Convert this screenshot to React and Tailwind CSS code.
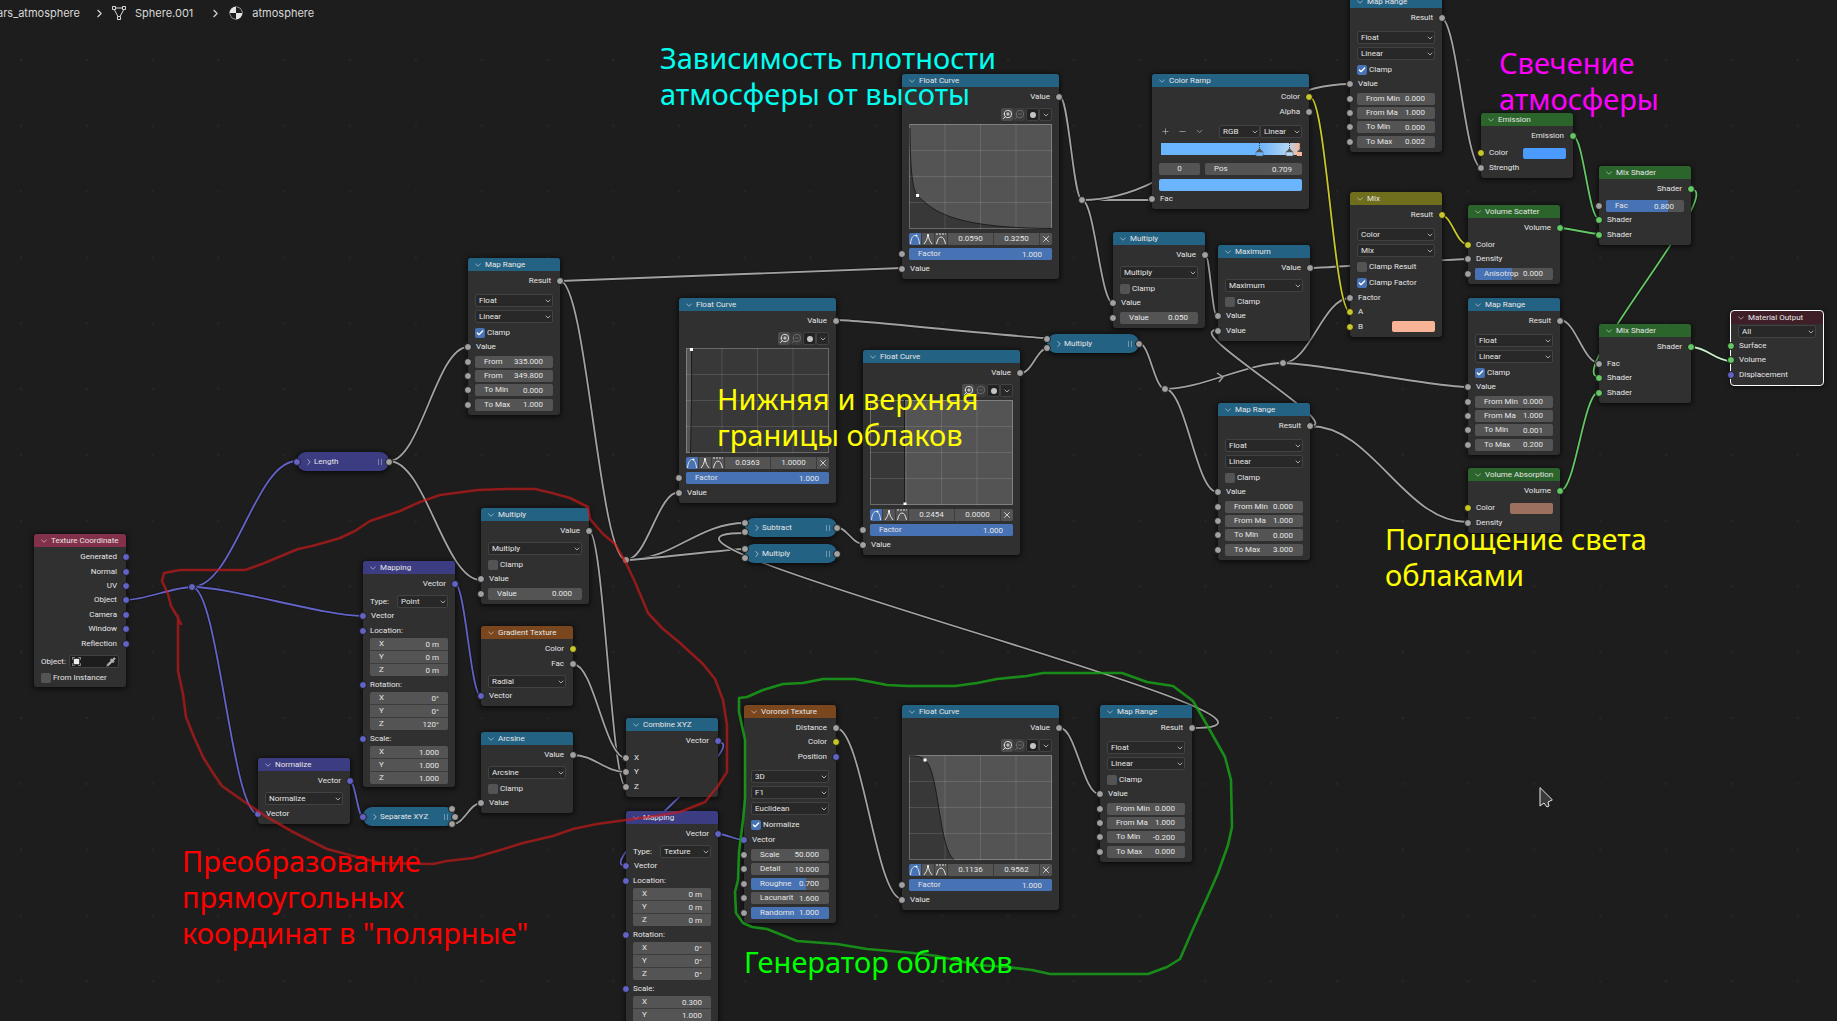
import React, { useId } from 'react';
import { Check, ChevronDown, ChevronRight, Minus, Pipette, Plus, X, ZoomIn, ZoomOut } from 'lucide-react';
import clsx from 'clsx';

const SOCKET_COLORS = {
  float: 'bg-[#a1a1a1]',
  vector: 'bg-[#6363c7]',
  color: 'bg-[#c7c729]',
  shader: 'bg-[#63c763]',
};

const HEADER_COLORS = {
  converter: 'bg-[#246283]',
  vector: 'bg-[#3c3c83]',
  texture: 'bg-[#79461d]',
  shader: 'bg-[#2b652b]',
  input: 'bg-[#83314a]',
  color: 'bg-[#6e6e1d]',
  output: 'bg-[#3f1e28]',
};

// socket rows share the height of their group evenly
const GROUP_HEIGHTS = {
  1: 'h-[14px]',
  2: 'h-[29px]',
  3: 'h-[43px]',
  4: 'h-[58px]',
  5: 'h-[72px]',
  6: 'h-[87px]',
  7: 'h-[101px]',
};

const LINK_COLORS = {
  float: '#a1a1a1',
  vector: '#6363c7',
  color: '#c7c729',
  shader: '#63c763',
  active: '#c9ecc9',
};

// [type, x1, y1, x2, y2]
const LINKS = [
  ['vector', 126, 600, 192, 587],
  ['vector', 192, 587, 297, 461],
  ['vector', 192, 587, 363, 616],
  ['vector', 192, 587, 258, 814],
  ['vector', 350, 781, 363, 817],
  ['vector', 455, 584, 481, 696],
  ['vector', 718, 742, 626, 866],
  ['vector', 718, 834, 744, 840],
  ['float', 389, 461, 468, 347],
  ['float', 389, 461, 481, 580],
  ['float', 453, 824, 481, 803],
  ['float', 589, 531, 626, 787],
  ['float', 573, 664, 626, 758],
  ['float', 573, 755, 626, 772],
  ['float', 560, 281, 902, 268],
  ['float', 560, 281, 626, 560],
  ['float', 626, 560, 679, 492],
  ['float', 626, 560, 745, 523],
  ['float', 626, 560, 745, 549],
  ['float', 1192, 728, 745, 533],
  ['float', 836, 728, 902, 899],
  ['float', 1060, 728, 1099, 794],
  ['float', 837, 320, 1048, 338],
  ['float', 1021, 373, 1048, 348],
  ['float', 836, 527, 863, 544],
  ['float', 1139, 343, 1165, 389],
  ['float', 1165, 389, 1283, 363],
  ['float', 1165, 389, 1217, 492],
  ['float', 1283, 363, 1350, 298],
  ['float', 1283, 363, 1467, 387],
  ['float', 1310, 426, 1467, 522],
  ['float', 1310, 426, 1217, 330],
  ['float', 1060, 97, 1082, 200],
  ['float', 1082, 200, 1152, 200],
  ['float', 1082, 200, 1350, 84],
  ['float', 1082, 200, 1113, 303],
  ['float', 1205, 254, 1217, 316],
  ['float', 1310, 268, 1467, 259],
  ['float', 1441, 18, 1481, 167],
  ['float', 1560, 320, 1599, 363],
  ['color', 1310, 97, 1350, 312],
  ['color', 1441, 215, 1467, 244],
  ['shader', 1573, 136, 1599, 219],
  ['shader', 1560, 228, 1599, 234],
  ['shader', 1691, 189, 1599, 377],
  ['shader', 1560, 491, 1599, 392],
  ['active', 1691, 347, 1731, 361],
];

const REROUTES = [
  ['vector', 192, 587],
  ['float', 626, 560],
  ['float', 1082, 200],
  ['float', 1165, 389],
  ['float', 1283, 363],
];

const RED_LOOP =
  '181,624 177,616 171,606 168,594 162,581 164,573 180,570 245,570 262,564 298,549 312,546 330,541 340,538 355,531 370,521 400,511 420,502 440,495 478,490 505,489 535,489 552,493 570,498 588,507 590,519 603,534 615,544 626,563 635,582 648,613 662,628 680,643 703,664 715,679 723,700 727,725 727,772 718,786 705,802 690,808 680,812 655,816 626,820 597,824 573,829 553,836 523,843 497,851 473,858 447,861 433,864 380,863 357,857 327,849 293,832 267,817 249,805 222,786 213,773 203,757 194,737 186,717 183,694 178,671 178,616';

const GREEN_LOOP =
  '739,698 747,697 763,690 783,684 803,683 823,679 855,679 872,682 887,685 907,686 955,686 977,683 997,679 1027,676 1043,673 1122,673 1147,682 1173,686 1193,701 1207,725 1225,757 1231,780 1232,827 1228,845 1218,873 1207,898 1193,929 1180,959 1167,967 1148,974 1050,974 1032,970 1007,967 977,965 937,956 913,953 867,949 837,944 797,941 767,929 752,927 743,923 736,913 735,892 738,880 739,852 743,820 745,798 745,740 739,712 739,698';

function linkPath(x1, y1, x2, y2) {
  const dx = Math.abs(x2 - x1);
  const slope = dx ? Math.abs(y2 - y1) / dx : 1;
  const handle = 0.4 * dx * Math.min(1, slope * 3.5);
  return `M${x1} ${y1}C${x1 + handle} ${y1} ${x2 - handle} ${y2} ${x2} ${y2}`;
}

function Socket({ type = 'float', side = 'left', className = 'top-1/2 -translate-y-1/2' }) {
  return (
    <span
      className={clsx(
        'absolute size-[8px] rounded-full border border-[#1a1a1a]',
        SOCKET_COLORS[type],
        side === 'left' ? '-left-[4px]' : '-right-[4px]',
        className
      )}
    />
  );
}

function Node({ title, kind = 'converter', width = 'w-[92px]', active = false, className, children }) {
  return (
    <section
      className={clsx(
        'absolute rounded-[3px] bg-[#303030] pb-[3px] shadow-[0_1px_5px_1px_rgba(0,0,0,0.65)]',
        active && 'outline outline-white',
        width,
        className
      )}
    >
      <header className={clsx('flex h-[13px] items-center gap-[2px] rounded-t-[3px] pl-[5px]', HEADER_COLORS[kind])}>
        <ChevronDown size={10} className="shrink-0 opacity-70" />
        <h2 className="whitespace-nowrap">{title}</h2>
      </header>
      {children}
    </section>
  );
}

function CollapsedNode({ title, kind = 'converter', className, children }) {
  return (
    <section
      className={clsx(
        'absolute flex h-[19px] w-[92px] items-center rounded-[9px] px-[7px] shadow-[0_1px_5px_1px_rgba(0,0,0,0.65)]',
        HEADER_COLORS[kind],
        className
      )}
    >
      <ChevronRight size={10} className="shrink-0 opacity-80" />
      <h2 className="whitespace-nowrap">{title}</h2>
      <span className="ml-auto h-[6px] w-[4px] border-x border-white/35" />
      {children}
    </section>
  );
}

// items: [label, socket type]
function Outputs({ items }) {
  return (
    <ul className={clsx('mt-[3px] grid auto-rows-fr', GROUP_HEIGHTS[items.length])}>
      {items.map(([label, type]) => (
        <li key={label} className="relative flex items-center justify-end pr-[9px]">
          {label}
          <Socket type={type} side="right" />
        </li>
      ))}
    </ul>
  );
}

function Controls({ roomy = false, children }) {
  return (
    <div className={clsx('flex flex-col gap-[3px] px-[7px]', roomy ? 'pt-[6px]' : 'pt-[4px]')}>{children}</div>
  );
}

function Inputs({ gap = 'mt-px', children }) {
  const rows = React.Children.toArray(children);
  return <div className={clsx('grid auto-rows-fr grid-cols-1', gap, GROUP_HEIGHTS[rows.length])}>{rows}</div>;
}

function InputRow({ type, children }) {
  return (
    <div className="relative flex items-center px-[7px]">
      <Socket type={type} />
      {children}
    </div>
  );
}

function LabelInput({ label, type }) {
  return (
    <InputRow type={type}>
      <span className="pl-px">{label}</span>
    </InputRow>
  );
}

function NumberField({ label, value, fill = 0 }) {
  const id = useId();
  return (
    <div className="relative flex h-[12px] w-full items-center overflow-hidden rounded-[2px] bg-[#545454] pr-[10px] pl-[9px]">
      {fill > 0 && <span className="absolute inset-y-0 left-0 bg-[#4772b3]" style={{ width: `${fill * 100}%` }} />}
      <label htmlFor={id} className="relative shrink-0">
        {label}
      </label>
      <input id={id} defaultValue={value} className="relative h-full w-0 flex-1 bg-transparent text-right" />
    </div>
  );
}

function NumberInput({ label, value, fill }) {
  return (
    <InputRow>
      <NumberField label={label} value={value} fill={fill} />
    </InputRow>
  );
}

function ColorInput({ label, color, name }) {
  return (
    <InputRow type="color">
      <span className="flex-1 pl-px">{label}</span>
      <button type="button" aria-label={name} className={clsx('h-[11px] w-[43px] rounded-[2px]', color)} />
    </InputRow>
  );
}

function Select({ value, label, width = 'w-full' }) {
  return (
    <span className={clsx('relative block', width)}>
      <select
        aria-label={label}
        defaultValue={value}
        className="block h-[13px] w-full appearance-none rounded-[2px] border border-[#424242] bg-[#282828] pl-[3px]"
      >
        <option>{value}</option>
      </select>
      <ChevronDown size={8} className="pointer-events-none absolute top-[3px] right-px" />
    </span>
  );
}

function Checkbox({ label, checked = false }) {
  return (
    <label className="flex h-[13px] items-center gap-[2px]">
      <span className="relative">
        <input
          type="checkbox"
          defaultChecked={checked}
          className="peer block size-[10px] appearance-none rounded-[2px] bg-[#545454] checked:bg-[#4772b3]"
        />
        <Check
          size={8}
          strokeWidth={4}
          className="pointer-events-none absolute top-px left-px hidden text-white peer-checked:block"
        />
      </span>
      {label}
    </label>
  );
}

function VectorInput({ label, values }) {
  return (
    <fieldset className="min-w-0">
      <legend className="contents">
        <span className="relative flex h-[15px] items-center pl-[7px]">
          {label}:
          <Socket type="vector" />
        </span>
      </legend>
      <div className="mx-[7px] grid h-[38px] grid-cols-1 gap-px overflow-hidden rounded-[2px] bg-[#3c3c3c]">
        {['X', 'Y', 'Z'].map((axis, i) => (
          <label key={axis} className="flex h-[12px] items-center bg-[#545454] px-[9px]">
            {axis}
            <input defaultValue={values[i]} className="h-full w-0 flex-1 bg-transparent text-right" />
          </label>
        ))}
      </div>
    </fieldset>
  );
}

function MapRange({ className, clamp = false, from = ['0.000', '1.000'], fromLabels = ['From Min', 'From Ma'], to }) {
  return (
    <Node title="Map Range" className={className}>
      <Outputs items={[['Result', 'float']]} />
      <Controls roomy>
        <Select label="Data type" value="Float" />
        <Select label="Interpolation" value="Linear" />
        <Checkbox label="Clamp" checked={clamp} />
      </Controls>
      <Inputs>
        <LabelInput label="Value" />
        <NumberInput label={fromLabels[0]} value={from[0]} />
        <NumberInput label={fromLabels[1]} value={from[1]} />
        <NumberInput label="To Min" value={to[0]} />
        <NumberInput label="To Max" value={to[1]} />
      </Inputs>
    </Node>
  );
}

function Mapping({ className, type, location, rotation, scale }) {
  return (
    <Node title="Mapping" kind="vector" className={className}>
      <Outputs items={[['Vector', 'vector']]} />
      <Controls>
        <label className="flex items-center justify-between">
          Type:
          <Select label="Type" value={type} width="w-[51px]" />
        </label>
      </Controls>
      <Inputs>
        <LabelInput label="Vector" type="vector" />
      </Inputs>
      <div className="grid grid-cols-1 gap-px">
        <VectorInput label="Location" values={location} />
        <VectorInput label="Rotation" values={rotation} />
        <VectorInput label="Scale" values={scale} />
      </div>
    </Node>
  );
}

function HandleButton({ name, active = false, children }) {
  return (
    <button
      type="button"
      aria-label={name}
      className={clsx('flex w-[12px] items-center justify-center', active ? 'bg-[#4772b3]' : 'bg-[#545454]')}
    >
      <svg viewBox="0 0 12 12" className="size-[12px]" fill="none" stroke="#e0e0e0">
        {children}
      </svg>
    </button>
  );
}

function FloatCurve({ className, area, curve, point, values }) {
  return (
    <Node title="Float Curve" width="w-[157px]" className={className}>
      <Outputs items={[['Value', 'float']]} />
      <Controls>
        <div className="flex h-[13px] justify-end">
          <button type="button" aria-label="Zoom in" className="flex w-[12px] items-center justify-center rounded-[2px] bg-[#4c4c4c]">
            <ZoomIn size={11} className="-scale-x-100" />
          </button>
          <button type="button" aria-label="Zoom out" className="flex w-[12px] items-center justify-center rounded-[2px] bg-[#3c3c3c] text-[#6e6e6e]">
            <ZoomOut size={11} className="-scale-x-100" />
          </button>
          <button type="button" aria-label="Clipping" className="ml-px flex w-[13px] items-center justify-center rounded-[2px] border border-[#424242] bg-[#222]">
            <span className="size-[6px] rounded-full bg-[#c4c4c4]" />
          </button>
          <button type="button" aria-label="Tools" className="flex w-[13px] items-center justify-center rounded-[2px] border border-[#424242] bg-[#282828]">
            <ChevronDown size={8} />
          </button>
        </div>
        <svg viewBox="0 0 143 105" preserveAspectRatio="none" className="block h-[105px] w-full">
          <rect width="143" height="105" fill="#545454" />
          <path d={area} fill="#383838" />
          <path d="M36 0V105M71.5 0V105M107 0V105M0 26.5H143M0 52.5H143M0 78.5H143" stroke="#fff" strokeOpacity="0.12" />
          <rect x="0.5" y="0.5" width="142" height="104" fill="none" stroke="#fff" strokeOpacity="0.25" />
          <path d={curve} fill="none" stroke="#1c1c1c" />
          <rect x={point[0] - 1.5} y={point[1] - 1.5} width="3" height="3" fill="#fff" />
        </svg>
        <div className="mt-px flex h-[12px] gap-px overflow-hidden rounded-[2px] bg-[#3c3c3c]">
          <HandleButton name="Auto handle" active>
            <path d="M1.5 11C2 5 4 2.500 6 2.500S10 5 10.500 11" />
            <circle cx="7.500" cy="2.500" r="1" fill="#fff" stroke="none" />
          </HandleButton>
          <HandleButton name="Vector handle">
            <path d="M2 11Q5 8 6 2Q7 8 10 11" />
            <circle cx="6" cy="2" r="1" fill="#fff" stroke="none" />
          </HandleButton>
          <HandleButton name="Auto clamped handle">
            <path d="M1.500 11Q3 4 6 4T10.500 11" />
            <path d="M1 1H11" strokeDasharray="2 1" />
          </HandleButton>
          <input aria-label="Point X" defaultValue={values[0]} className="w-0 flex-1 bg-[#545454] text-center" />
          <input aria-label="Point Y" defaultValue={values[1]} className="w-0 flex-1 bg-[#545454] text-center" />
          <button type="button" aria-label="Delete point" className="flex w-[12px] items-center justify-center bg-[#545454]">
            <X size={10} />
          </button>
        </div>
      </Controls>
      <Inputs gap="mt-[2px]">
        <NumberInput label="Factor" value="1.000" fill={1} />
        <LabelInput label="Value" />
      </Inputs>
    </Node>
  );
}

function ColorRamp({ className }) {
  return (
    <Node title="Color Ramp" width="w-[157px]" className={className}>
      <Outputs items={[['Color', 'color'], ['Alpha', 'float']]} />
      <Controls roomy>
        <div className="flex h-[13px] items-center">
          <div className="flex flex-1 items-center gap-[8px] pl-[2px] text-[#a8a8a8]">
            <button type="button" aria-label="Add stop"><Plus size={9} /></button>
            <button type="button" aria-label="Remove stop"><Minus size={9} /></button>
            <button type="button" aria-label="Ramp tools"><ChevronDown size={9} /></button>
          </div>
          <Select label="Color mode" value="RGB" width="w-[41px]" />
          <Select label="Ramp interpolation" value="Linear" width="w-[42px]" />
        </div>
        <svg viewBox="0 0 143 19" className="block h-[19px] w-full">
          <defs>
            <linearGradient id="ramp">
              <stop offset="0.709" stopColor="#6bb5ff" />
              <stop offset="0.92" stopColor="#b4d4ef" />
              <stop offset="1" stopColor="#f7b497" />
            </linearGradient>
          </defs>
          <rect x="2" y="2" width="139" height="12" fill="url(#ramp)" />
          <path d="M100.500 2V8M130.500 2V8M141 2V8" stroke="#444" strokeDasharray="1 1" />
          <path d="M97 11l3.500-4 3.500 4zM127 11l3.500-4 3.500 4zM138 11l3.500-4v4z" fill="#555" />
          <rect x="97" y="11" width="7" height="4" fill="#6bb5ff" stroke="#555" strokeWidth="0.5" />
          <rect x="127" y="11" width="7" height="4" fill="#b9dcf8" stroke="#555" strokeWidth="0.5" />
          <rect x="138" y="11" width="5" height="4" fill="#f7b497" />
        </svg>
        <div className="flex justify-between">
          <input aria-label="Active stop" defaultValue="0" className="h-[12px] w-[41px] rounded-[2px] bg-[#545454] text-center" />
          <div className="w-[97px]">
            <NumberField label="Pos" value="0.709" />
          </div>
        </div>
        <button type="button" aria-label="Stop color" className="mt-px h-[12px] rounded-[2px] bg-[#6bb5ff]" />
      </Controls>
      <Inputs>
        <LabelInput label="Fac" />
      </Inputs>
    </Node>
  );
}

function Links() {
  return (
    <svg className="absolute inset-0 h-full w-full" fill="none">
      <defs>
        <pattern id="grid" x="20" y="59" width="65.8" height="65.8" patternUnits="userSpaceOnUse">
          <rect width="2" height="2" fill="#272727" />
        </pattern>
      </defs>
      <rect width="100%" height="100%" fill="url(#grid)" />
      {LINKS.map(([type, ...ends]) => (
        <g key={ends.join()}>
          <path d={linkPath(...ends)} stroke="#141414" strokeWidth="3.5" />
          <path d={linkPath(...ends)} stroke={LINK_COLORS[type]} strokeWidth="1.8" />
        </g>
      ))}
      <path d="M1217 373L1223 377L1219 382" stroke="#a1a1a1" strokeWidth="1.5" />
      {REROUTES.map(([type, x, y]) => (
        <circle key={x} cx={x} cy={y} r="3.5" fill={LINK_COLORS[type]} stroke="#1a1a1a" />
      ))}
    </svg>
  );
}

function Note({ className, lines }) {
  return (
    <p className={clsx("absolute font-['Noto_Sans','Open_Sans',sans-serif] text-[29px] leading-[36px] whitespace-nowrap", className)}>
      {lines.map((line) => (
        <span key={line} className="block">
          {line}
        </span>
      ))}
    </p>
  );
}

function Breadcrumbs() {
  return (
    <nav className="relative -ml-[46px] flex h-[26px] items-center font-['Inter',sans-serif] text-[11px] text-[#d8d8d8]">
      <a href="#object" className="w-[126px] text-right">Mars_atmosphere</a>
      <ChevronRight size={13} className="mr-[6px] ml-[13px]" />
      <svg viewBox="0 0 14 14" className="mr-[9px] size-[14px]" fill="none" stroke="currentColor">
        <path d="M3 2H11M2.500 4L6 10.500M11.500 4L8 10.500" />
        <path d="M0.500 0.500h3v3h-3zM10.500 0.500h3v3h-3zM5.500 10.500h3v3h-3z" />
      </svg>
      <a href="#mesh">Sphere.001</a>
      <ChevronRight size={13} className="mr-[7px] ml-[16px]" />
      <svg viewBox="0 0 14 14" className="mr-[9px] size-[14px]">
        <circle cx="7" cy="7" r="6.500" fill="#e4e4e4" />
        <path d="M7 7V1A6 6 0 0 1 13 7ZM7 7V13A6 6 0 0 1 1 7Z" fill="#1d1d1d" />
      </svg>
      <a href="#material">atmosphere</a>
    </nav>
  );
}

export default function App() {
  return (
    <main className="relative h-screen w-full overflow-hidden bg-[#1d1d1d] font-['Roboto','Inter',sans-serif] text-[8px] leading-[12px] text-[#e6e6e6]">
      <Links />
      <Breadcrumbs />

      {/* Coordinates */}
      <Node title="Texture Coordinate" kind="input" className="top-[534px] left-[34px]">
        <Outputs
          items={[
            ['Generated', 'vector'],
            ['Normal', 'vector'],
            ['UV', 'vector'],
            ['Object', 'vector'],
            ['Camera', 'vector'],
            ['Window', 'vector'],
            ['Reflection', 'vector'],
          ]}
        />
        <Controls>
          <label className="flex items-center justify-between">
            Object:
            <span className="flex h-[13px] w-[50px] items-center rounded-[2px] border border-[#424242] bg-[#1d1d1d] px-[2px]">
              <svg viewBox="0 0 10 10" className="size-[9px]" fill="none" stroke="#999">
                <path d="M0.500 3V0.500H3M7 0.500H9.500V3M9.500 7V9.500H7M3 9.500H0.500V7" />
                <rect x="2" y="2" width="6" height="6" fill="#eee" stroke="none" />
              </svg>
              <input className="w-0 flex-1 bg-transparent" />
              <Pipette size={10} fill="currentColor" className="text-[#b0b0b0]" />
            </span>
          </label>
          <Checkbox label="From Instancer" />
        </Controls>
      </Node>
      <CollapsedNode title="Length" kind="vector" className="top-[452px] left-[297px]">
        <Socket type="vector" />
        <Socket side="right" />
      </CollapsedNode>
      <Mapping
        className="top-[561px] left-[363px]"
        type="Point"
        location={['0 m', '0 m', '0 m']}
        rotation={['0°', '0°', '120°']}
        scale={['1.000', '1.000', '1.000']}
      />
      <Node title="Normalize" kind="vector" className="top-[758px] left-[258px]">
        <Outputs items={[['Vector', 'vector']]} />
        <Controls>
          <Select label="Operation" value="Normalize" />
        </Controls>
        <Inputs gap="mt-[2px]">
          <LabelInput label="Vector" type="vector" />
        </Inputs>
      </Node>
      <CollapsedNode title="Separate XYZ" className="top-[807px] left-[363px]">
        <Socket type="vector" />
        <Socket side="right" className="top-[-2px] mr-[3px]" />
        <Socket side="right" />
        <Socket side="right" className="bottom-[-2px] mr-[3px]" />
      </CollapsedNode>
      <MapRange
        className="top-[258px] left-[468px]"
        clamp
        fromLabels={['From', 'From']}
        from={['335.000', '349.800']}
        to={['0.000', '1.000']}
      />
      <Node title="Multiply" width="w-[108px]" className="top-[508px] left-[481px]">
        <Outputs items={[['Value', 'float']]} />
        <Controls>
          <Select label="Operation" value="Multiply" />
          <Checkbox label="Clamp" />
        </Controls>
        <Inputs>
          <LabelInput label="Value" />
          <NumberInput label="Value" value="0.000" />
        </Inputs>
      </Node>
      <Node title="Gradient Texture" kind="texture" className="top-[626px] left-[481px]">
        <Outputs items={[['Color', 'color'], ['Fac', 'float']]} />
        <Controls>
          <Select label="Gradient type" value="Radial" />
        </Controls>
        <Inputs>
          <LabelInput label="Vector" type="vector" />
        </Inputs>
      </Node>
      <Node title="Arcsine" className="top-[732px] left-[481px]">
        <Outputs items={[['Value', 'float']]} />
        <Controls>
          <Select label="Operation" value="Arcsine" />
          <Checkbox label="Clamp" />
        </Controls>
        <Inputs>
          <LabelInput label="Value" />
        </Inputs>
      </Node>
      <Node title="Combine XYZ" className="top-[718px] left-[626px]">
        <Outputs items={[['Vector', 'vector']]} />
        <Inputs gap="mt-[3px]">
          <LabelInput label="X" />
          <LabelInput label="Y" />
          <LabelInput label="Z" />
        </Inputs>
      </Node>

      {/* Cloud generator */}
      <Mapping
        className="top-[811px] left-[626px]"
        type="Texture"
        location={['0 m', '0 m', '0 m']}
        rotation={['0°', '0°', '0°']}
        scale={['0.300', '1.000', '1.000']}
      />
      <Node title="Voronoi Texture" kind="texture" className="top-[705px] left-[744px]">
        <Outputs items={[['Distance', 'float'], ['Color', 'color'], ['Position', 'vector']]} />
        <Controls roomy>
          <Select label="Dimensions" value="3D" />
          <Select label="Feature" value="F1" />
          <Select label="Distance metric" value="Euclidean" />
          <Checkbox label="Normalize" checked />
        </Controls>
        <Inputs gap="mt-[2px]">
          <LabelInput label="Vector" type="vector" />
          <NumberInput label="Scale" value="50.000" />
          <NumberInput label="Detail" value="10.000" />
          <NumberInput label="Roughne" value="0.700" fill={0.7} />
          <NumberInput label="Lacunarit" value="1.600" />
          <NumberInput label="Randomn" value="1.000" fill={1} />
        </Inputs>
      </Node>
      <FloatCurve
        className="top-[705px] left-[902px]"
        area="M0 1Q11 0 16 5C30 15 30 95 45 104.500V105H0Z"
        curve="M0 1Q11 0 16 5C30 15 30 95 45 104.500"
        point={[16, 5]}
        values={['0.1136', '0.9562']}
      />
      <MapRange className="top-[705px] left-[1100px]" to={['-0.200', '0.000']} />

      {/* Cloud borders */}
      <FloatCurve
        className="top-[298px] left-[679px]"
        area="M5 0H143V105H5Z"
        curve="M5.500 1V53L4.500 105"
        point={[5.5, 1.5]}
        values={['0.0363', '1.0000']}
      />
      <FloatCurve
        className="top-[350px] left-[863px]"
        area="M0 0H35V105H0Z"
        curve="M34.500 0V105"
        point={[35, 104]}
        values={['0.2454', '0.0000']}
      />
      <CollapsedNode title="Subtract" className="top-[518px] left-[745px]">
        <Socket className="top-[1px]" />
        <Socket className="bottom-[1px]" />
        <Socket side="right" />
      </CollapsedNode>
      <CollapsedNode title="Multiply" className="top-[544px] left-[745px]">
        <Socket className="top-[1px]" />
        <Socket className="bottom-[1px]" />
        <Socket side="right" />
      </CollapsedNode>
      <CollapsedNode title="Multiply" className="top-[334px] left-[1047px]">
        <Socket className="top-[1px]" />
        <Socket className="bottom-[1px]" />
        <Socket side="right" />
      </CollapsedNode>

      {/* Density by height */}
      <FloatCurve
        className="top-[74px] left-[902px]"
        area="M1 0C1 40 3 66 8.500 71.500C25 88 45 104 143 104.500V105H0V0Z"
        curve="M1 4C1 40 3 66 8.500 71.500C25 88 45 104 143 104.500"
        point={[8.5, 71.5]}
        values={['0.0590', '0.3250']}
      />
      <ColorRamp className="top-[74px] left-[1152px]" />
      <Node title="Multiply" className="top-[232px] left-[1113px]">
        <Outputs items={[['Value', 'float']]} />
        <Controls>
          <Select label="Operation" value="Multiply" />
          <Checkbox label="Clamp" />
        </Controls>
        <Inputs>
          <LabelInput label="Value" />
          <NumberInput label="Value" value="0.050" />
        </Inputs>
      </Node>
      <Node title="Maximum" className="top-[245px] left-[1218px]">
        <Outputs items={[['Value', 'float']]} />
        <Controls>
          <Select label="Operation" value="Maximum" />
          <Checkbox label="Clamp" />
        </Controls>
        <Inputs>
          <LabelInput label="Value" />
          <LabelInput label="Value" />
        </Inputs>
      </Node>
      <MapRange className="top-[403px] left-[1218px]" to={['0.000', '3.000']} />

      {/* Shading */}
      <MapRange className="-top-[5px] left-[1350px]" clamp to={['0.000', '0.002']} />
      <Node title="Mix" kind="color" className="top-[192px] left-[1350px]">
        <Outputs items={[['Result', 'color']]} />
        <Controls roomy>
          <Select label="Data type" value="Color" />
          <Select label="Blend mode" value="Mix" />
          <Checkbox label="Clamp Result" />
          <Checkbox label="Clamp Factor" checked />
        </Controls>
        <Inputs gap="mt-[2px]">
          <LabelInput label="Factor" />
          <LabelInput label="A" type="color" />
          <ColorInput label="B" name="Color B" color="bg-[#f7b497]" />
        </Inputs>
      </Node>
      <Node title="Emission" kind="shader" className="top-[113px] left-[1481px]">
        <Outputs items={[['Emission', 'shader']]} />
        <Inputs gap="mt-[3px]">
          <ColorInput label="Color" name="Emission color" color="bg-[#4b9bff]" />
          <LabelInput label="Strength" />
        </Inputs>
      </Node>
      <Node title="Volume Scatter" kind="shader" className="top-[205px] left-[1468px]">
        <Outputs items={[['Volume', 'shader']]} />
        <Inputs gap="mt-[3px]">
          <LabelInput label="Color" type="color" />
          <LabelInput label="Density" />
          <NumberInput label="Anisotrop" value="0.000" fill={0.48} />
        </Inputs>
      </Node>
      <MapRange className="top-[298px] left-[1468px]" clamp to={['0.001', '0.200']} />
      <Node title="Volume Absorption" kind="shader" className="top-[468px] left-[1468px]">
        <Outputs items={[['Volume', 'shader']]} />
        <Inputs gap="mt-[3px]">
          <ColorInput label="Color" name="Absorption color" color="bg-[#9c705e]" />
          <LabelInput label="Density" />
        </Inputs>
      </Node>
      <Node title="Mix Shader" kind="shader" className="top-[166px] left-[1599px]">
        <Outputs items={[['Shader', 'shader']]} />
        <Inputs gap="mt-[3px]">
          <NumberInput label="Fac" value="0.800" fill={0.8} />
          <LabelInput label="Shader" type="shader" />
          <LabelInput label="Shader" type="shader" />
        </Inputs>
      </Node>
      <Node title="Mix Shader" kind="shader" className="top-[324px] left-[1599px]">
        <Outputs items={[['Shader', 'shader']]} />
        <Inputs gap="mt-[3px]">
          <LabelInput label="Fac" />
          <LabelInput label="Shader" type="shader" />
          <LabelInput label="Shader" type="shader" />
        </Inputs>
      </Node>
      <Node title="Material Output" kind="output" active className="top-[311px] left-[1731px]">
        <div className="px-[7px] pt-px">
          <Select label="Target" value="All" />
        </div>
        <Inputs>
          <LabelInput label="Surface" type="shader" />
          <LabelInput label="Volume" type="shader" />
          <LabelInput label="Displacement" type="vector" />
        </Inputs>
      </Node>

      {/* Hand-drawn annotations */}
      <svg className="pointer-events-none absolute inset-0 h-full w-full" fill="none" strokeLinejoin="round" strokeLinecap="round">
        <polyline points={RED_LOOP} stroke="#d01818" strokeOpacity="0.65" strokeWidth="2.6" />
        <polyline points={GREEN_LOOP} stroke="#18a818" strokeOpacity="0.8" strokeWidth="2.6" />
        <path d="M1540 788V806L1544 803L1547 807L1549 806L1548 802L1552 800Z" fill="#3a3a3a" stroke="#e8e8e8" />
      </svg>
      <Note className="top-[40px] left-[660px] text-[#00fff0]" lines={['Зависимость плотности', 'атмосферы от высоты']} />
      <Note className="top-[45px] left-[1499px] text-[#ff00ff]" lines={['Свечение', 'атмосферы']} />
      <Note className="top-[381px] left-[717px] text-[#ffff00]" lines={['Нижняя и верхняя', 'границы облаков']} />
      <Note className="top-[521px] left-[1385px] text-[#ffff00]" lines={['Поглощение света', 'облаками']} />
      <Note className="top-[843px] left-[182px] text-[#ff0000]" lines={['Преобразование', 'прямоугольных', 'координат в "полярные"']} />
      <Note className="top-[944px] left-[744px] text-[#00ff00]" lines={['Генератор облаков']} />
    </main>
  );
}
